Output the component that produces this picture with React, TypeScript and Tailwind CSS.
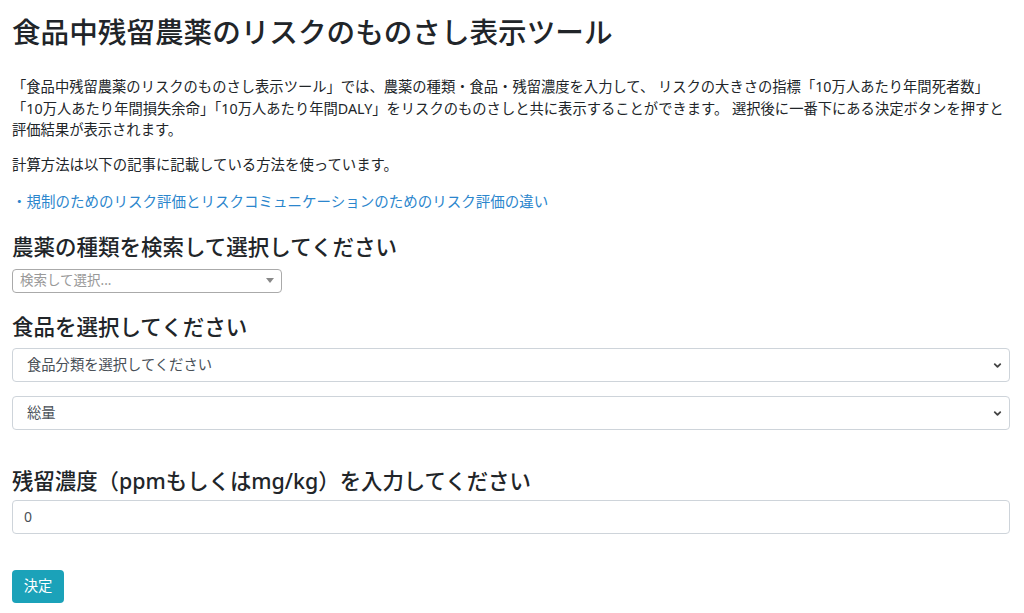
import { ChevronDown } from 'lucide-react';

const font = { fontFamily: '"Noto Sans", "Noto Sans CJK JP", sans-serif' };

// Bootstrap-style native select, with the chevron drawn over it
function FormSelect({ value }: { value: string }) {
    return (
        <div className="relative">
            <select
                className="w-full h-[34px] appearance-none rounded-[4px] border border-[#ced4da] bg-white pl-[14px] pr-8 text-[14.3px] text-[#495057] outline-none"
                defaultValue={value}
            >
                <option>{value}</option>
            </select>
            <ChevronDown
                size={11}
                strokeWidth={4}
                className="pointer-events-none absolute right-[7px] top-[12px] text-[#444]"
            />
        </div>
    );
}

export default function App() {
    return (
        <div className="min-h-screen bg-white pl-3 pr-[14px] pt-[15px] text-[#212529]" style={font}>
            <h1 className="text-[28.6px] leading-[34px] font-medium">食品中残留農薬のリスクのものさし表示ツール</h1>

            {/* the original breaks the intro into these three lines */}
            <p className="mt-[27px] text-[14.3px] leading-[21.5px]">
                <span className="block whitespace-nowrap">
                    「食品中残留農薬のリスクのものさし表示ツール」では、農薬の種類・食品・残留濃度を入力して、 リスクの大きさの指標「10万人あたり年間死者数」
                </span>
                <span className="block whitespace-nowrap">
                    「10万人あたり年間損失余命」「10万人あたり年間DALY」をリスクのものさしと共に表示することができます。 選択後に一番下にある決定ボタンを押すと
                </span>
                <span className="block whitespace-nowrap">評価結果が表示されます。</span>
            </p>

            <p className="mt-[13.5px] text-[14.4px] leading-[21.5px]">計算方法は以下の記事に記載している方法を使っています。</p>

            <p className="mt-[15.5px] text-[14.5px] leading-[21.5px]">
                <a href="#" className="text-[#2b86cd]">・規制のためのリスク評価とリスクコミュニケーションのためのリスク評価の違い</a>
            </p>

            {/* 農薬 */}
            <h4 className="mt-[21px] text-[21.5px] leading-[26px] font-medium">農薬の種類を検索して選択してください</h4>
            <div className="mt-[9px] flex h-[24px] w-[270px] items-center justify-between rounded-[4px] border border-[#aaa] bg-white pl-[7px] pr-[7px]">
                <span className="text-[13.5px] text-[#999]">検索して選択...</span>
                <span className="h-0 w-0 border-x-[4px] border-t-[5px] border-x-transparent border-t-[#888]" />
            </div>

            {/* 食品 */}
            <h4 className="mt-[21px] text-[21.5px] leading-[26px] font-medium">食品を選択してください</h4>
            <div className="mt-[8px] flex flex-col gap-[14px]">
                <FormSelect value="食品分類を選択してください" />
                <FormSelect value="総量" />
            </div>

            {/* 残留濃度 */}
            <h4 className="mt-[38px] text-[21.4px] leading-[26px] font-medium">残留濃度（ppmもしくはmg/kg）を入力してください</h4>
            <input
                type="text"
                defaultValue="0"
                className="mt-[6px] block h-[34px] w-full rounded-[4px] border border-[#ced4da] px-[11px] text-[14px] text-[#495057] outline-none"
            />

            <button className="mt-[36px] h-[33px] w-[52px] rounded-[4px] bg-[#1ba2b9] text-[14.3px] text-white">
                決定
            </button>
        </div>
    );
}
